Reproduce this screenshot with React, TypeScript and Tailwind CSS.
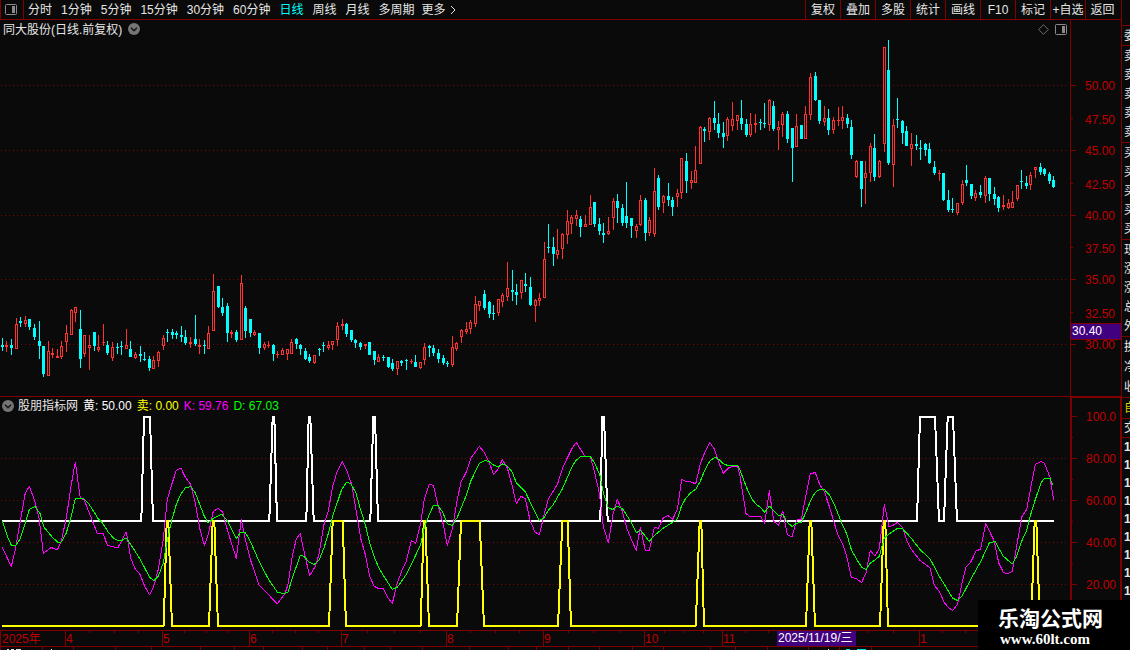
import React from "react";

type Candle = { x: number; high: number; top: number; bottom: number; low: number; up: boolean };
type Batch = { ox: number; oy: number; rows: string };

// Each row: centre, direction, high, body top, body bottom, low (in thirds of a pixel from the batch origin).
const CANDLE_BATCHES: Batch[] = [
  {
    ox: 0,
    oy: 260,
    rows: `7 d 234 255 261 273;19 u 243 255 261 276;34 d 237 255 264 285;49 u 174 192 267 267;61 d 171 183 189 201;76 u 168 180 192 201;88 d 177 177 201 210;103 d 192 204 231 240;118 d 183 243 258 297;130 d 258 258 342 351;145 u 243 273 348 348;157 u 264 279 285 294;172 u 267 288 294 294;184 u 243 258 291 297;199 u 195 219 246 276;214 u 147 150 225 225;226 u 141 141 159 186;241 d 150 207 297 324;253 u 225 225 282 291;268 u 225 255 264 330;283 d 216 216 258 273;295 u 225 261 270 276;310 u 192 246 249 258;322 d 243 255 279 285;337 u 246 261 294 303;352 d 249 261 264 282;364 d 243 258 261 285;379 u 207 255 267 267;391 d 243 267 291 291;406 u 276 282 294 297;421 d 258 282 288 306;433 d 276 297 300 303;448 d 288 297 324 333;460 u 288 300 327 327;475 u 273 276 303 321;490 u 225 234 258 270;502 d 207 216 219 246;517 d 207 216 225 237;529 d 213 219 225 237;544 d 198 225 231 246;556 d 210 231 249 255;571 u 231 246 252 264;586 d 165 237 252 258;598 u 237 255 261 282;613 d 240 255 258 282;625 u 198 219 267 267;640 u 42 93 213 213;655 d 78 78 141 144;667 d 114 141 159 168;682 d 129 138 219 246;694 u 210 216 222 234;709 d 210 216 240 246;724 u 45 69 240 240;736 d 138 144 213 234;751 d 177 177 219 231;763 u 210 216 225 228;778 d 219 219 264 282;793 u 246 252 264 270;805 u 243 255 258 264;820 d 252 255 282 303`,
  },
  {
    ox: 270,
    oy: 260,
    rows: `22 u 273 282 285 294;37 u 264 270 285 285;52 u 267 267 282 300;64 u 237 246 282 282;79 d 234 237 252 267;91 d 252 255 267 285;106 d 264 273 297 300;118 d 282 291 303 309;133 u 285 285 309 312;148 d 264 267 270 288;160 d 246 255 258 276;175 u 243 255 264 270;187 u 243 243 255 270;202 u 186 198 240 258;217 u 177 192 198 210;229 d 189 192 222 231;244 d 210 210 240 246;256 d 237 240 249 264;271 d 246 249 261 270;286 u 252 252 258 267;298 d 246 246 285 285;313 d 273 273 300 315;325 u 282 291 306 306;340 d 285 291 294 303;355 d 291 291 321 324;367 d 297 309 327 333;382 u 303 303 327 345;394 d 300 303 309 318;409 d 297 300 303 330;424 u 297 303 306 312;436 d 285 306 321 321;451 u 306 306 324 327;463 u 249 261 300 315;478 d 255 258 264 291;490 d 255 264 279 288;505 d 267 279 297 309;520 d 285 294 309 315;532 d 303 309 312 321;547 u 228 261 315 321;559 u 246 249 267 273;574 u 207 210 231 249;589 u 186 207 216 222;601 u 180 186 207 222;616 u 108 132 192 201;628 u 123 123 138 153;643 d 90 102 144 150;658 d 123 126 162 174;670 d 135 159 162 180;685 u 117 117 159 168;697 u 99 105 126 141;712 u 6 84 111 123;727 d 30 90 96 123;739 d 72 96 105 135`,
  },
  {
    ox: 520,
    oy: 80,
    rows: `4 u 600 600 639 657;16 d 579 612 618 636;31 d 591 621 675 678;46 u 657 660 678 726;58 u 639 654 663 678;73 u 486 537 654 654;85 d 432 501 504 519;100 d 471 501 522 558;112 u 447 510 525 537;127 u 459 462 507 537;142 u 390 423 465 492;154 u 405 411 432 462;169 u 390 405 417 438;181 d 408 417 441 471;196 u 405 432 441 441;211 u 345 381 435 435;223 d 366 366 432 441;238 d 414 432 453 465;250 d 429 459 465 489;265 u 411 453 462 465;280 u 354 363 414 450;292 d 342 363 384 429;307 d 372 384 429 438;319 d 306 408 429 444;334 d 414 414 438 474;349 u 432 438 453 474;361 u 345 360 435 438;376 d 354 360 459 483;388 u 411 420 459 468;403 u 264 333 462 471;415 d 285 294 381 390;430 u 345 348 369 399;445 d 309 348 360 378;457 d 351 360 381 408;472 u 327 339 351 381;484 u 234 234 339 357;499 d 219 243 303 339;514 u 273 300 309 327;526 u 198 270 309 309;541 u 138 141 252 252;553 d 141 147 153 186;568 u 111 114 156 180;583 d 63 114 129 150;595 d 99 132 159 174;610 d 126 159 171 204;622 u 111 117 168 183;637 u 66 117 138 153;652 u 105 105 123 150;664 d 60 114 132 150;679 d 117 132 165 171;691 u 99 132 165 171;706 u 102 129 135 159;721 d 117 126 129 150;733 d 69 129 132 144;748 u 57 60 135 153;760 d 63 78 147 153;775 u 123 141 150 210;787 u 96 102 135 171;802 d 93 102 177 189`,
  },
  {
    ox: 790,
    oy: 30,
    rows: `7 d 294 294 354 456;19 u 252 288 351 351;34 d 285 285 327 327;46 u 228 252 327 327;61 u 129 141 255 270;76 d 126 138 210 213;88 d 210 210 273 282;103 u 228 264 276 288;115 d 237 264 300 315;130 u 261 270 300 312;145 u 231 270 273 288;157 u 228 261 273 297;172 d 252 264 282 294;184 d 270 291 375 387;199 u 390 393 441 444;214 d 393 393 477 531;226 u 393 429 444 522;241 u 339 348 429 456;253 d 312 354 441 453;268 u 390 393 441 444;283 u 51 51 342 366;295 d 30 120 399 405;310 u 267 285 405 471;322 d 204 267 270 294;337 d 270 273 309 342;349 d 288 303 348 348;364 u 309 342 357 408;379 d 315 342 348 360;391 d 330 354 357 390;406 d 339 342 360 378;418 d 339 357 399 402;433 d 393 411 429 435;448 u 420 429 432 453;460 d 429 429 510 513;475 d 480 510 540 546;487 d 504 537 540 549;502 u 519 519 549 555;517 u 450 462 519 525;529 d 405 450 459 468;544 d 462 462 498 507;556 u 480 489 504 513;571 d 465 486 495 504;586 u 438 444 498 519;598 d 444 444 492 513;613 d 471 492 507 525;625 d 498 501 534 546;640 u 495 525 531 540;655 u 507 519 534 537;667 u 483 516 534 534;682 u 465 465 507 513;694 d 420 453 456 477;709 d 438 459 468 477;721 u 426 435 465 480;736 u 411 411 420 444;751 d 399 411 426 435;763 d 414 417 432 438;778 d 426 432 453 462;790 d 438 450 471 474`,
  },
];

const CANDLES: Candle[] = CANDLE_BATCHES.flatMap(({ ox, oy, rows }) =>
  rows.split(";").map((row) => {
    const [c, dir, high, top, bottom, low] = row.split(" ");
    const y = (v: string) => oy + Math.round(Number(v) / 3);
    return {
      x: ox + Math.floor(Number(c) / 3),
      up: dir === "u",
      high: y(high),
      top: y(top),
      bottom: y(bottom),
      low: y(low),
    };
  }),
);

// Line series: three consecutive sections starting at x = 0, 370 and 740.
const SECTION_X = [0, 370, 740];
const toPoints = (sections: string[]) =>
  sections
    .flatMap((s, i) =>
      s.split(" ").map((pair) => {
        const [x, y] = pair.split(",").map(Number);
        return `${(SECTION_X[i] + x / 3).toFixed(1)},${(396 + y / 3 + 0.2).toFixed(1)}`;
      }),
    )
    .join(" ");

const K_LINE = toPoints([
  "7,454 34,511 46,460 76,290 88,271 103,310 118,370 130,471 154,454 172,462 184,435 199,365 214,265 226,198 241,305 253,312 268,350 292,412 310,412 322,447 340,452 354,454 367,430 379,407 392,485 405,517 420,535 434,570 449,596 462,568 475,520 490,430 502,310 516,262 529,223 543,216 556,243 572,265 586,320 600,400 613,448 625,415 640,345 655,337 668,347 683,405 709,487 724,370 736,430 751,490 778,568 805,595 832,623 855,592 864,565 877,480 889,428 901,412 915,480 929,538 945,512 957,475 972,385 985,345 998,270 1012,225 1027,196 1040,222 1055,265 1070,355 1083,430 1096,475 1109,540",
  "12,570 24,576 40,577 52,602 67,622 82,560 97,520 109,495 124,433 137,441 152,380 163,310 178,265 190,267 205,330 220,385 232,448 247,398 262,310 273,258 290,225 302,187 328,151 343,168 358,200 371,235 385,218 397,190 412,215 427,270 439,322 454,300 466,308 481,375 495,407 508,417 520,365 535,308 550,285 563,262 577,218 592,185 607,155 619,139 632,160 645,180 661,180 673,225 688,290 700,390 715,440 729,355 742,310 757,345 770,395 784,430 799,463 811,392 826,463 838,463 853,394 865,396 880,365 893,358 908,369 922,340 935,250 948,256 962,257 977,263 991,203 1006,165 1019,139 1033,158 1047,200 1060,232 1074,216 1090,210 1103,210",
  "0,240 18,352 30,361 62,361 74,382 88,283 101,375 116,388 128,344 142,415 156,422 170,371 184,370 197,300 211,233 226,229 240,267 253,285 267,328 293,415 308,445 320,480 334,543 350,548 365,559 378,530 391,463 404,479 418,458 433,324 447,391 460,387 472,379 487,393 500,433 513,458 540,493 570,515 583,568 598,585 612,618 625,634 638,643 653,623 666,560 678,512 692,498 708,465 722,458 737,382 763,435 776,500 790,528 803,533 817,525 830,450 845,362 860,340 872,275 886,205 903,196 913,201 930,243 941,312",
]);

const D_LINE = toPoints([
  "7,375 22,420 34,447 48,447 60,428 76,380 88,340 105,331 120,352 132,393 155,421 175,440 184,437 199,410 214,360 226,307 250,307 268,325 295,368 307,380 325,408 340,425 355,434 367,432 379,425 392,445 420,488 449,544 462,553 475,540 490,500 502,432 516,370 529,325 543,293 556,275 572,271 586,290 613,360 625,380 640,366 665,354 683,375 709,427 722,408 735,408 751,435 778,497 805,548 832,588 848,592 864,588 877,545 901,478 912,480 926,497 942,505 957,492 972,455 985,412 998,360 1025,280 1040,258 1052,262 1068,290 1083,345 1096,385 1109,440",
  "12,480 28,518 67,580 82,573 109,535 137,477 152,445 163,393 178,355 190,328 204,328 218,348 232,383 247,388 262,363 290,295 302,255 328,202 345,193 356,196 371,207 385,212 397,203 412,210 427,228 439,260 466,287 481,318 508,373 520,367 535,343 550,325 577,278 607,210 619,192 632,181 661,181 673,198 690,238 700,290 715,335 729,340 742,330 757,337 784,378 799,410 811,402 826,420 838,436 853,418 880,396 908,378 922,368 935,328 948,305 962,290 977,279 991,255 1006,218 1019,195 1035,183 1047,190 1060,203 1074,208 1103,208",
  "0,222 18,270 35,308 50,326 62,334 74,349 88,329 101,343 116,359 128,354 142,378 156,391 170,381 184,378 197,350 211,315 226,288 240,280 253,280 267,295 280,318 293,350 308,388 320,413 334,460 350,490 365,513 378,520 391,500 404,492 418,480 433,425 447,413 472,397 487,397 513,425 540,460 570,488 598,540 638,606 653,613 666,600 692,550 722,496 748,440 765,436 776,456 790,480 817,504 830,480 845,435 860,403 872,355 886,310 903,260 913,247 930,247 938,266",
]);

const BUY_LINE = toPoints([
  "7,375 424,375 432,62 450,62 459,375 808,375 818,61 823,61 831,375 919,375 926,61 931,61 941,375",
  "1,375 10,61 15,61 24,375 691,375 697,61 702,61 713,375",
  "531,375 540,62 585,62 597,375 612,375 623,62 639,62 651,375 942,375",
]);

const SELL_LINE = toPoints([
  "7,690 491,690 500,375 505,375 516,690 627,690 638,375 643,375 654,690 987,690 998,375 1028,375 1038,690",
  "152,690 161,375 166,375 177,690 261,690 273,375 329,375 342,690 564,690 577,375 593,375 603,690 977,690 989,375 994,375 1002,690",
  "198,690 209,375 214,375 225,690 420,690 431,375 436,375 444,690 873,690 884,375 889,375 900,690 970,690",
]);

const PERIODS = ["分时", "1分钟", "5分钟", "15分钟", "30分钟", "60分钟", "日线", "周线", "月线", "多周期"];
const TOOLS = ["复权", "叠加", "多股", "统计", "画线", "F10", "标记", "+自选"];

const PRICE_TICKS: [number, string][] = [
  [85, "50.00"],
  [118, "47.50"],
  [150, "45.00"],
  [183, "42.50"],
  [215, "40.00"],
  [247, "37.50"],
  [279, "35.00"],
  [312, "32.50"],
  [344, "30.00"],
];
const KD_TICKS: [number, string][] = [
  [416, "100.0"],
  [458, "80.00"],
  [500, "60.00"],
  [542, "40.00"],
  [584, "20.00"],
];

const MONTHS: [number, string][] = [
  [65, "4"],
  [162, "5"],
  [249, "6"],
  [341, "7"],
  [446, "8"],
  [543, "9"],
  [644, "10"],
  [722, "11"],
  [919, "1"],
];
const WEEK_TICKS = [
  89, 114, 138, 184, 206, 227, 272, 295, 318, 367, 394, 420, 470, 495, 519, 568, 593, 619, 664, 683, 703, 745, 768, 867,
  893, 942, 965,
];
const STATUS_DIVIDERS = [
  42, 73, 115, 151, 200, 234, 263, 302, 327, 364, 390, 422, 469, 508, 536, 568, 599, 632, 663, 710, 735, 767, 808, 839,
  871,
];

function PanelIcon({ label }: { label: string }) {
  return (
    <svg width="12" height="11" viewBox="0 0 12 11" role="img" aria-label={label}>
      <rect x="0.5" y="0.5" width="11" height="10" rx="1" fill="none" stroke="#8a8a8a" />
      <rect x="7" y="2" width="3" height="7" fill="#8a8a8a" />
    </svg>
  );
}

function ChevronButton({ label }: { label: string }) {
  return (
    <button type="button" aria-label={label} className="block shrink-0">
      <svg width="12" height="12" viewBox="0 0 12 12">
        <circle cx="6" cy="6" r="6" fill="#757575" />
        <path d="M3 4.8 L6 7.8 L9 4.8" fill="none" stroke="#151515" strokeWidth="1.5" />
      </svg>
    </button>
  );
}

function Grid({ ys }: { ys: number[] }) {
  return (
    <g stroke="#780808" strokeDasharray="1 3" shapeRendering="crispEdges">
      {ys.map((y) => (
        <line key={y} x1="1" x2="1067" y1={y + 0.5} y2={y + 0.5} />
      ))}
    </g>
  );
}

function CandleChart() {
  return (
    <svg className="block h-[358px] w-full" viewBox="0 38 1070 358" preserveAspectRatio="none" shapeRendering="crispEdges">
      <Grid ys={[85, 150, 215, 279, 344]} />
      {CANDLES.map((c) => {
        const color = c.up ? "#ff3232" : "#00ffff";
        const height = Math.max(1, c.bottom - c.top);
        return (
          <g key={c.x} fill={color}>
            <rect x={c.x} y={c.high} width="1" height={Math.max(1, c.low - c.high)} />
            <rect x={c.x - 1} y={c.top} width="3" height={height} />
            {c.up && height > 2 && <rect x={c.x} y={c.top + 1} width="1" height={height - 2} fill="#0a0a0a" />}
          </g>
        );
      })}
    </svg>
  );
}

function IndicatorChart() {
  return (
    <svg className="block h-[216px] w-full" viewBox="0 414 1070 216" preserveAspectRatio="none" shapeRendering="crispEdges">
      <Grid ys={[458, 500, 542, 584]} />
      <g fill="none" strokeLinejoin="bevel">
        <polyline points={BUY_LINE} stroke="#ffffff" strokeWidth="2" />
        <polyline points={SELL_LINE} stroke="#ffff00" strokeWidth="2" />
        <polyline points={K_LINE} stroke="#ff00ff" />
        <polyline points={D_LINE} stroke="#00ff00" />
      </g>
    </svg>
  );
}

function AxisTick({ y, label, minor }: { y: number; label: string; minor: boolean }) {
  return (
    <g>
      <rect x="0" y={y} width={minor ? 2 : 5} height="1" fill="#800000" />
      <text x="44" y={y + (minor ? 6 : 5)} textAnchor="end" fill="#c00000">
        {label}
      </text>
    </g>
  );
}

function DateAxis() {
  return (
    <svg className="block h-5 w-full text-xs" viewBox="0 630 1130 20" preserveAspectRatio="xMinYMin slice">
      <g fill="#800000">
        <rect x="0" y="630" width="1130" height="1" />
        <rect x="0" y="646" width="1130" height="1" />
        <rect x="0" y="630" width="1" height="20" />
        {WEEK_TICKS.map((x) => (
          <rect key={x} x={x} y="631" width="1" height="2" />
        ))}
        {STATUS_DIVIDERS.map((x) => (
          <rect key={x} x={x} y="647" width="1" height="3" />
        ))}
      </g>
      <text x="2" y="643" fill="#c00000">
        2025年
      </text>
      {MONTHS.map(([x, label]) => (
        <g key={x}>
          <rect x={x} y="630" width="1" height="17" fill="#800000" />
          <text x={x + 1} y="643" fill="#c00000">
            {label}
          </text>
        </g>
      ))}
      <rect x="777" y="631" width="79" height="15" fill="#400080" />
      <text x="778" y="642" fill="#ffffff">
        2025/11/19/三
      </text>
      <g fill="#e0e0e0">
        <rect x="7" y="649" width="2" height="1" />
        <rect x="11" y="649" width="3" height="1" />
        <rect x="16" y="649" width="5" height="1" />
        <rect x="51" y="649" width="1" height="1" />
        <rect x="828" y="649" width="1" height="1" />
      </g>
      <g fill="#00e5e5">
        <rect x="846" y="649" width="4" height="1" />
        <rect x="857" y="649" width="9" height="1" />
      </g>
    </svg>
  );
}

function QuoteGroup({ rows, className }: { rows: string[]; className: string }) {
  return (
    <div className={`flex flex-col justify-around border-t border-[#800000] ${className}`}>
      {rows.map((r, i) => (
        <span key={i} className="block pl-0.5 leading-4 whitespace-nowrap">
          {r}
        </span>
      ))}
    </div>
  );
}

export default function App() {
  return (
    <div className='relative w-full overflow-hidden bg-[#0a0a0a] font-["Liberation_Sans","Noto_Sans_CJK_SC",sans-serif] text-xs leading-4 text-[#e6e6e6]'>
      <div className="flex">
        <div className="min-w-0 flex-1">
          <header className="flex h-5 items-stretch border-b border-[#800000]">
            <button type="button" className="flex w-6 items-center justify-center border-x border-[#800000] pr-0.5">
              <PanelIcon label="侧栏" />
            </button>
            <nav className="flex flex-1 items-center gap-[9px] pl-1 whitespace-nowrap">
              {PERIODS.map((p) => (
                <button key={p} type="button" className={p === "日线" ? "text-[#00ffff]" : ""}>
                  {p}
                </button>
              ))}
              <button type="button" className="-ml-0.5 flex items-center gap-1">
                更多
                <svg width="6" height="10" viewBox="0 0 6 10" aria-hidden="true">
                  <path d="M1 1 L5 5 L1 9" fill="none" stroke="#e6e6e6" />
                </svg>
              </button>
            </nav>
            {TOOLS.map((t) => (
              <button key={t} type="button" className="w-[35px] border-l border-[#800000] text-center whitespace-nowrap">
                {t}
              </button>
            ))}
            <button type="button" className="w-9 border-l border-[#800000] pr-0.5 text-center whitespace-nowrap">
              返回
            </button>
          </header>

          <section className="flex">
            <div className="min-w-0 flex-1">
              <div className="flex h-[18px] items-center gap-1.5 pr-[3px] pl-[3px]">
                <h1 className="pt-0.5">同大股份(日线.前复权)</h1>
                <ChevronButton label="展开" />
                <span className="flex-1" />
                <svg width="11" height="11" viewBox="0 0 11 11" aria-hidden="true">
                  <path d="M5.5 0.7 L10.3 5.5 L5.5 10.3 L0.7 5.5 Z" fill="none" stroke="#707070" />
                </svg>
                <PanelIcon label="面板" />
              </div>
              <CandleChart />
            </div>
            <svg
              className="block h-[376px] w-[51px] shrink-0 border-l border-[#800000] text-xs"
              viewBox="0 20 50 376"
            >
              {PRICE_TICKS.map(([y, label], i) => (
                <AxisTick key={label} y={y} label={label} minor={i % 2 === 1} />
              ))}
              <rect x="0" y="323" width="50" height="17" fill="#800000" />
              <rect x="0" y="324" width="50" height="15" fill="#400080" />
              <text x="1" y="335" fill="#ffffff">
                30.40
              </text>
            </svg>
          </section>

          <section className="flex">
            <div className="min-w-0 flex-1 border-t border-[#800000]">
              <div className="flex h-[17px] items-center gap-[5px] pl-0.5">
                <ChevronButton label="指标" />
                <h2 className="-ml-px">股朋指标网</h2>
                <span className="text-white">黄: 50.00</span>
                <span className="text-[#ffff00]">卖: 0.00</span>
                <span className="text-[#ff00ff]">K: 59.76</span>
                <span className="text-[#00ff00]">D: 67.03</span>
              </div>
              <IndicatorChart />
            </div>
            <svg
              className="block h-[234px] w-[51px] shrink-0 border-t-2 border-r border-l-2 border-[#800000] text-xs"
              viewBox="0 398 48 232"
            >
              {KD_TICKS.map(([y, label]) => (
                <AxisTick key={label} y={y} label={label} minor={false} />
              ))}
              {[437, 479, 521, 563].map((y) => (
                <rect key={y} x="0" y={y} width="1" height="1" fill="#800000" />
              ))}
            </svg>
          </section>
        </div>

        <aside className="h-[630px] w-[9px] shrink-0 overflow-hidden border-l border-[#800000] pt-[25px]">
          <QuoteGroup rows={["委"]} className="h-5" />
          <QuoteGroup rows={["卖", "卖", "卖", "卖", "卖"]} className="h-[97px]" />
          <QuoteGroup rows={["买", "买", "买", "买", "买"]} className="h-[97px]" />
          <QuoteGroup rows={["现", "涨", "涨", "总", "外"]} className="h-[97px]" />
          <QuoteGroup rows={["换", "净", "收"]} className="h-[61px]" />
          <QuoteGroup rows={["自"]} className="h-[21px] text-[#d0d000]" />
          <QuoteGroup rows={["交"]} className="h-[19px]" />
          <QuoteGroup rows={["1", "1", "1", "1", "1", "1", "1", "1", "1"]} className="h-[163px] font-bold" />
        </aside>
      </div>

      <DateAxis />

      <div className="absolute right-0 bottom-0 flex h-[50px] w-[152px] flex-col bg-black pt-[7px] pl-5 text-white">
        <span className='font-["Liberation_Sans","Noto_Sans_CJK_SC",sans-serif] text-[21px] leading-6 font-bold'>
          乐淘公式网
        </span>
        <span className='pl-0.5 font-["Liberation_Serif",serif] text-[15px] leading-4 font-bold'>www.60lt.com</span>
      </div>
    </div>
  );
}
